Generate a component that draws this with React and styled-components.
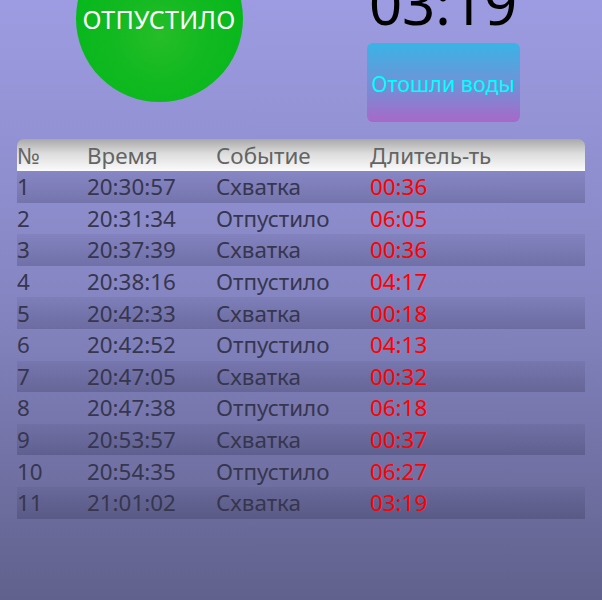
import React from 'react';
import styled, { createGlobalStyle } from 'styled-components';

const GlobalStyle = createGlobalStyle`
  html, body {
    margin: 0;
    padding: 0;
    height: 100%;
    overflow: hidden;
  }
  body {
    background: linear-gradient(to bottom, #9d9ce2 0%, #8585c2 50%, #61618d 100%);
    font-family: 'Noto Sans', 'Open Sans', sans-serif;
  }
`;

const Page = styled.div`
  padding: 0 17px;
  margin-top: -65px;
`;

const Top = styled.div`
  display: grid;
  grid-template-columns: 1fr 1fr;
  height: 204px;
`;

const LeftCol = styled.div`
  display: flex;
  justify-content: center;
  align-items: flex-start;
`;

const RightCol = styled.div`
  display: flex;
  flex-direction: column;
  align-items: center;
`;

const Circle = styled.div`
  width: 167px;
  height: 167px;
  border-radius: 50%;
  background: radial-gradient(circle at 50% 60%, #26bd28 0%, #12b920 35%, #06b81c 70%);
  color: #fff;
  font-size: 25px;
  letter-spacing: 0.3px;
  display: flex;
  align-items: center;
  justify-content: center;
`;

const Timer = styled.div`
  font-size: 58px;
  line-height: 1;
  color: #000;
  margin-top: 39px;
`;

const WaterButton = styled.div`
  width: 153px;
  height: 79px;
  margin-top: 11px;
  border-radius: 6px;
  background: linear-gradient(to bottom, #38b4e6 0%, #6d94d8 50%, #a868c8 100%);
  color: #00ffff;
  font-size: 21.5px;
  display: flex;
  align-items: center;
  justify-content: center;
  padding-top: 2px;
  box-sizing: border-box;
  white-space: nowrap;
`;

const Table = styled.div`
  width: 568px;
`;

const Row = styled.div`
  display: grid;
  grid-template-columns: 70px 129px 154px 1fr;
  height: ${(p) => (p.header ? '32px' : '31.6px')};
  align-items: center;
  font-size: 22.4px;
  color: ${(p) => (p.header ? '#646464' : '#36364e')};
  border-radius: ${(p) => (p.header ? '7px 7px 0 0' : '0')};
  background: ${(p) =>
    p.header
      ? 'linear-gradient(to bottom, #a9a9a9 0%, #dcdcdc 45%, #fbfbfb 100%)'
      : p.shaded
      ? 'linear-gradient(to bottom, rgba(40,40,80,0.08) 0%, rgba(30,30,60,0.22) 100%)'
      : 'transparent'};
`;

const Cell = styled.div`
  white-space: nowrap;
  color: ${(p) => (p.red ? '#ff0000' : 'inherit')};
`;

const rows = [
  ['1', '20:30:57', 'Схватка', '00:36'],
  ['2', '20:31:34', 'Отпустило', '06:05'],
  ['3', '20:37:39', 'Схватка', '00:36'],
  ['4', '20:38:16', 'Отпустило', '04:17'],
  ['5', '20:42:33', 'Схватка', '00:18'],
  ['6', '20:42:52', 'Отпустило', '04:13'],
  ['7', '20:47:05', 'Схватка', '00:32'],
  ['8', '20:47:38', 'Отпустило', '06:18'],
  ['9', '20:53:57', 'Схватка', '00:37'],
  ['10', '20:54:35', 'Отпустило', '06:27'],
  ['11', '21:01:02', 'Схватка', '03:19'],
];

export default function App() {
  return (
    <>
      <GlobalStyle />
      <Page>
        <Top>
          <LeftCol>
            <Circle>ОТПУСТИЛО</Circle>
          </LeftCol>
          <RightCol>
            <Timer>03:19</Timer>
            <WaterButton>Отошли воды</WaterButton>
          </RightCol>
        </Top>
        <Table>
          <Row header>
            <Cell>№</Cell>
            <Cell>Время</Cell>
            <Cell>Событие</Cell>
            <Cell>Длитель-ть</Cell>
          </Row>
          {rows.map((r, i) => (
            <Row key={r[0]} shaded={i % 2 === 0}>
              <Cell>{r[0]}</Cell>
              <Cell>{r[1]}</Cell>
              <Cell>{r[2]}</Cell>
              <Cell red>{r[3]}</Cell>
            </Row>
          ))}
        </Table>
      </Page>
    </>
  );
}
